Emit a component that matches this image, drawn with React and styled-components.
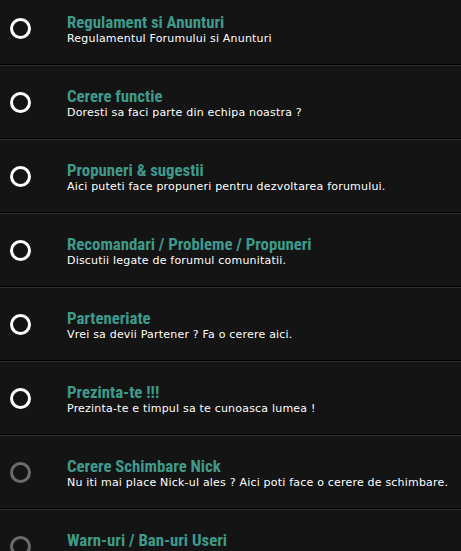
import React from 'react'
import styled, { createGlobalStyle } from 'styled-components'

const Global = createGlobalStyle`
	html, body {
		margin: 0;
		padding: 0;
		background: #141414;
	}
`

const List = styled.div`
	display: flex;
	flex-direction: column;
	margin-top: -8px;
`

const Row = styled.div`
	display: flex;
	align-items: center;
	height: 72px;
	border-bottom: 1px solid #000;
	box-shadow: 0 1px 0 #2c2c2c;
	margin-bottom: 1px;
	background: #141414;
`

const Status = styled.span`
	flex: none;
	box-sizing: border-box;
	width: 21px;
	height: 21px;
	margin-left: 10px;
	border-radius: 50%;
	border: 3px solid ${({ unread }) => (unread ? '#ffffff' : '#6b6b6b')};
`

const Info = styled.div`
	display: flex;
	flex-direction: column;
	margin-left: 36px;
	margin-top: 2px;
`

const Title = styled.a`
	font-family: 'Roboto Condensed', Roboto, sans-serif;
	font-stretch: condensed;
	font-weight: 700;
	font-size: 16.8px;
	line-height: 18px;
	color: #3f9a8b;
	text-decoration: none;
`

const Desc = styled.div`
	font-family: 'DejaVu Sans', Tahoma, sans-serif;
	font-size: 11px;
	letter-spacing: 0.2px;
	line-height: 14px;
	color: #ffffff;
	margin-top: 1px;
	-webkit-font-smoothing: none;
`

const forums = [
	{ title: 'Regulament si Anunturi', desc: 'Regulamentul Forumului si Anunturi', unread: true },
	{ title: 'Cerere functie', desc: 'Doresti sa faci parte din echipa noastra ?', unread: true },
	{ title: 'Propuneri & sugestii', desc: 'Aici puteti face propuneri pentru dezvoltarea forumului.', unread: true },
	{ title: 'Recomandari / Probleme / Propuneri', desc: 'Discutii legate de forumul comunitatii.', unread: true },
	{ title: 'Parteneriate', desc: 'Vrei sa devii Partener ? Fa o cerere aici.', unread: true },
	{ title: 'Prezinta-te !!!', desc: 'Prezinta-te e timpul sa te cunoasca lumea !', unread: true },
	{ title: 'Cerere Schimbare Nick', desc: 'Nu iti mai place Nick-ul ales ? Aici poti face o cerere de schimbare.', unread: false },
	{ title: 'Warn-uri / Ban-uri Useri', desc: 'Aici se posteaza warn-urile si ban-urile userilor.', unread: false }
]

export default function App() {
	return (
		<>
			<Global />
			<List>
				{forums.map(({ title, desc, unread }, i) => (
					<Row key={i}>
						<Status unread={unread} />
						<Info>
							<Title href="#">{title}</Title>
							<Desc>{desc}</Desc>
						</Info>
					</Row>
				))}
			</List>
		</>
	)
}
